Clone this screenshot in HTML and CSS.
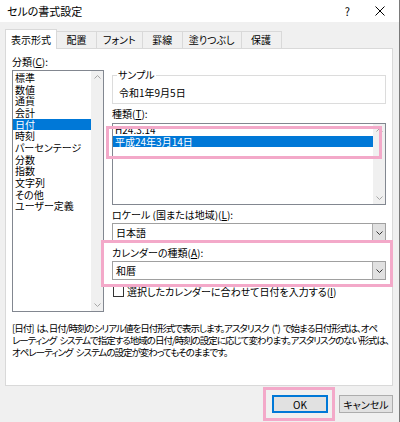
FILE: index.html
```html
<!DOCTYPE html>
<html lang="ja">
<head>
<meta charset="UTF-8">
<title>セルの書式設定</title>
<link rel="stylesheet" href="styles.css">
</head>
<body>
<div class="window">
    <div class="titlebar">
        <span class="title">セルの書式設定</span>
        <span class="help">?</span>
        <svg class="close" width="10" height="10" viewBox="0 0 10 10"><path d="M0.5 0.5L9.5 9.5M9.5 0.5L0.5 9.5" stroke="#000" stroke-width="1" fill="none"/></svg>
    </div>

    <div class="tabs">
        <div class="tab active">表示形式</div>
        <div class="tab">配置</div>
        <div class="tab">フォント</div>
        <div class="tab">罫線</div>
        <div class="tab">塗りつぶし</div>
        <div class="tab">保護</div>
    </div>

    <div class="panel">
        <div class="columns">
            <div class="left">
                <div class="label">分類(<u>C</u>):</div>
                <div class="listbox category">
                    <ul class="items">
                        <li>標準</li>
                        <li>数値</li>
                        <li>通貨</li>
                        <li>会計</li>
                        <li class="sel">日付</li>
                        <li>時刻</li>
                        <li>パーセンテージ</li>
                        <li>分数</li>
                        <li>指数</li>
                        <li>文字列</li>
                        <li>その他</li>
                        <li>ユーザー定義</li>
                    </ul>
                    <div class="scroll">
                        <svg width="7" height="4" viewBox="0 0 7 4"><path d="M0.5 3.5L3.5 0.5L6.5 3.5" stroke="#a6a6a6" fill="none"/></svg>
                        <svg width="7" height="4" viewBox="0 0 7 4"><path d="M0.5 0.5L3.5 3.5L6.5 0.5" stroke="#a6a6a6" fill="none"/></svg>
                    </div>
                </div>
            </div>

            <div class="right">
                <fieldset class="sample">
                    <legend>サンプル</legend>
                    <div class="sample-value">令和1年9月5日</div>
                </fieldset>

                <div class="label gap">種類(<u>T</u>):</div>
                <div class="listbox types">
                    <ul class="items">
                        <li>H24.3.14</li>
                        <li class="sel">平成24年3月14日</li>
                    </ul>
                    <div class="scroll">
                        <svg width="7" height="4" viewBox="0 0 7 4"><path d="M0.5 3.5L3.5 0.5L6.5 3.5" stroke="#a6a6a6" fill="none"/></svg>
                        <svg width="7" height="4" viewBox="0 0 7 4"><path d="M0.5 0.5L3.5 3.5L6.5 0.5" stroke="#a6a6a6" fill="none"/></svg>
                    </div>
                </div>

                <div class="label gap">ロケール (国または地域)(<u>L</u>):</div>
                <div class="combo">
                    <span class="combo-text">日本語</span>
                    <span class="drop"><svg width="7" height="4" viewBox="0 0 7 4"><path d="M0.5 0.5L3.5 3.5L6.5 0.5" stroke="#333" fill="none"/></svg></span>
                </div>

                <div class="label gap2">カレンダーの種類(<u>A</u>):</div>
                <div class="combo">
                    <span class="combo-text">和暦</span>
                    <span class="drop"><svg width="7" height="4" viewBox="0 0 7 4"><path d="M0.5 0.5L3.5 3.5L6.5 0.5" stroke="#333" fill="none"/></svg></span>
                </div>

                <div class="check-row">
                    <span class="checkbox"></span>
                    <span>選択したカレンダーに合わせて日付を入力する(<u>I</u>)</span>
                </div>
            </div>
        </div>

        <p class="desc">[日付] は、日付/時刻のシリアル値を日付形式で表示します。アスタリスク (*) で始まる日付形式は、オペ<br>レーティング システムで指定する地域の日付/時刻の設定に応じて変わります。アスタリスクのない形式は、<br>オペレーティング システムの設定が変わってもそのままです。</p>
    </div>

    <div class="footer">
        <button class="btn default">OK</button>
        <button class="btn">キャンセル</button>
    </div>

    <!-- highlight marks -->
    <div class="mark mark-types"></div>
    <div class="mark mark-calendar"></div>
    <div class="mark mark-ok"></div>
</div>
</body>
</html>
```

FILE: styles.css
```css
* { box-sizing: border-box; }
body {
    margin: 0;
    background: #f0f0f0;
    font-family: "Noto Sans CJK JP", sans-serif;
    font-size: 10px;
    font-feature-settings: "palt";
    color: #000;
}
u { text-decoration: underline; text-underline-offset: 1px; }
.window {
    position: relative;
    width: 400px;
    height: 422px;
    overflow: hidden;
    background: #f0f0f0;
    border-right: 1px solid #7a7a7a;
}
.titlebar {
    height: 22px;
    background: #fff;
    display: flex;
    align-items: center;
    padding: 0 14px 0 7px;
}
.title { font-size: 11px; flex: 1; }
.help { font-size: 11px; margin-right: 25px; }
.close { display: block; }

.tabs {
    display: flex;
    align-items: flex-end;
    height: 26px;
    padding-left: 5px;
}
.tab {
    height: 17px;
    min-width: 40px;
    line-height: 16px;
    padding: 0 6px;
    text-align: center;
    border: 1px solid #d9d9d9;
    border-bottom: none;
    border-left: none;
    background: #f0f0f0;
}
.tab.active {
    height: 20px;
    margin-bottom: -1px;
    line-height: 19px;
    padding: 0 5px;
    background: #fff;
    border-left: 1px solid #d9d9d9;
    position: relative;
}
.panel {
    margin: 0 6px 0 5px;
    height: 338px;
    background: #fff;
    border: 1px solid #d9d9d9;
    padding: 7px 6px 0 6px;
}
.columns {
    display: flex;
    gap: 8px;
}
.left { width: 92px; }
.right { flex: 1; padding-top: 13px; }
.label { line-height: 12px; height: 12px; }
.label.gap { margin-top: 4px; }
.label.gap2 { margin-top: 5px; }

.listbox {
    display: flex;
    border: 1px solid #828790;
    background: #fff;
}
.listbox.category { height: 242px; margin-top: 2px; }
.listbox.types { height: 82px; margin-top: 3px; }
.items {
    list-style: none;
    margin: 0;
    padding: 1px 0 0 0;
    flex: 1;
}
.items li {
    line-height: 11.67px;
    height: 11.67px;
    padding-left: 2px;
    white-space: nowrap;
}
.types .items { padding-top: 0; }
.types .items li { line-height: 11.5px; height: 11.5px; }
.items li.sel { background: #0078d7; color: #fff; }
.scroll {
    width: 12px;
    background: #f0f0f0;
    display: flex;
    flex-direction: column;
    justify-content: space-between;
    align-items: center;
    padding: 4px 0 4px;
}
.scroll svg { display: block; }

.sample {
    margin: 0;
    padding: 6px 4px 3px 4px;
    border: 1px solid #dcdcdc;
    height: 35px;
}
.sample legend {
    padding: 0 1px;
    margin-left: 0;
    line-height: 12px;
}
.sample-value { line-height: 12px; padding-left: 2px; }

.combo {
    display: flex;
    height: 19px;
    margin-top: 2px;
    border: 1px solid #a0a0a0;
    background: #fff;
}
.combo-text { flex: 1; line-height: 17px; padding-left: 3px; }
.drop {
    width: 13px;
    background: #e1e1e1;
    border-left: 1px solid #adadad;
    display: flex;
    align-items: center;
    justify-content: center;
}
.check-row {
    display: flex;
    align-items: center;
    gap: 3px;
    margin-top: 5px;
    height: 12px;
    padding-left: 1px;
}
.checkbox {
    width: 11px;
    height: 11px;
    border: 1px solid #333;
    background: #fff;
}
.desc {
    margin: 11px 0 0 0;
    font-size: 9.5px;
    line-height: 11.8px;
    white-space: nowrap;
    letter-spacing: -1px;
    word-spacing: 2px;
}

.footer {
    display: flex;
    justify-content: flex-end;
    gap: 11px;
    padding: 9px 6px 0 0;
}
.btn {
    font: inherit;
    font-weight: normal;
    height: 18px;
    padding: 0;
    background: #e1e1e1;
    border: 1px solid #adadad;
    color: #000;
    width: 54px;
}
.btn.default { border: 1px solid #0078d7; width: 56px; box-shadow: inset 0 0 0 1px #0078d7; }

.mark {
    position: absolute;
    border: 3px solid #f3a9c9;
}
.mark-types { left: 106px; top: 126px; width: 276px; height: 33px; }
.mark-calendar { left: 101px; top: 240px; width: 292px; height: 47px; }
.mark-ok { left: 263px; top: 387px; width: 72px; height: 34px; }
```
